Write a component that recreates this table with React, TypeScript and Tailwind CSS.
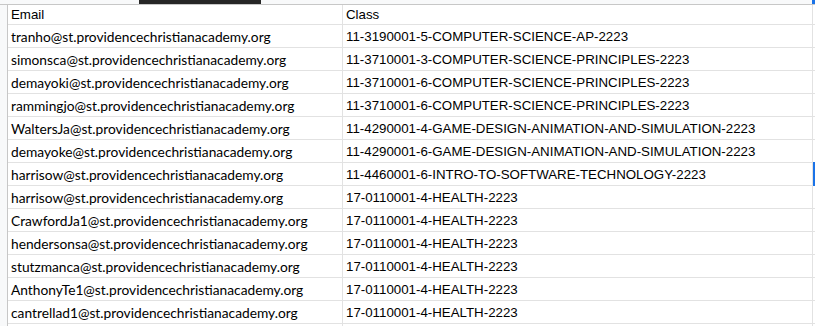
const rows: [string, string][] = [
  ["tranho@st.providencechristianacademy.org", "11-3190001-5-COMPUTER-SCIENCE-AP-2223"],
  ["simonsca@st.providencechristianacademy.org", "11-3710001-3-COMPUTER-SCIENCE-PRINCIPLES-2223"],
  ["demayoki@st.providencechristianacademy.org", "11-3710001-6-COMPUTER-SCIENCE-PRINCIPLES-2223"],
  ["rammingjo@st.providencechristianacademy.org", "11-3710001-6-COMPUTER-SCIENCE-PRINCIPLES-2223"],
  ["WaltersJa@st.providencechristianacademy.org", "11-4290001-4-GAME-DESIGN-ANIMATION-AND-SIMULATION-2223"],
  ["demayoke@st.providencechristianacademy.org", "11-4290001-6-GAME-DESIGN-ANIMATION-AND-SIMULATION-2223"],
  ["harrisow@st.providencechristianacademy.org", "11-4460001-6-INTRO-TO-SOFTWARE-TECHNOLOGY-2223"],
  ["harrisow@st.providencechristianacademy.org", "17-0110001-4-HEALTH-2223"],
  ["CrawfordJa1@st.providencechristianacademy.org", "17-0110001-4-HEALTH-2223"],
  ["hendersonsa@st.providencechristianacademy.org", "17-0110001-4-HEALTH-2223"],
  ["stutzmanca@st.providencechristianacademy.org", "17-0110001-4-HEALTH-2223"],
  ["AnthonyTe1@st.providencechristianacademy.org", "17-0110001-4-HEALTH-2223"],
  ["cantrellad1@st.providencechristianacademy.org", "17-0110001-4-HEALTH-2223"],
  ["", ""],
];

export default function App() {
  return (
    <div className="w-[815px] h-[326px] overflow-hidden bg-white text-black">
      {/* column header strip */}
      <div className="flex h-[5px] bg-[#f8f9fa] border-b border-[#c7c7c7]">
        <div className="w-[139px]" />
        <div className="w-[122px] h-[4px] bg-[#262626]" />
        <div className="flex-1" />
        <div className="w-[3px] h-[4px] bg-[#1a73e8]" />
      </div>

      <div className="flex">
        {/* row number gutter */}
        <div className="w-[8px] shrink-0 bg-[#f8f9fa] border-r border-[#c7c7c7]" />

        <div className="flex-1">
          <div className="flex h-[20px] border-b border-[#e2e2e2] font-['Liberation_Sans',Arial,sans-serif] text-[13.3px] leading-[20px]">
            <div className="w-[335px] shrink-0 pl-[3px] border-r border-[#e2e2e2]">Email</div>
            <div className="w-[470px] shrink-0 pl-[3px] border-r border-[#e2e2e2]">Class</div>
          </div>
          {rows.map(([email, cls], i) => (
            <div key={i} className="flex h-[23px] border-b border-[#e2e2e2]">
              <div className="w-[335px] shrink-0 pl-[3px] border-r border-[#e2e2e2] font-['Lato','Open_Sans',sans-serif] text-[13.75px] leading-[23px] whitespace-nowrap">
                {email}
              </div>
              <div className="relative w-[470px] shrink-0 pl-[3px] border-r border-[#e2e2e2] font-['Liberation_Sans',Arial,sans-serif] text-[13.3px] leading-[23px] whitespace-nowrap">
                {cls}
                {i === 6 && <div className="absolute right-[-4px] top-[-1px] w-[3px] h-[24px] bg-[#1a73e8]" />}
              </div>
            </div>
          ))}
        </div>
      </div>
    </div>
  );
}
